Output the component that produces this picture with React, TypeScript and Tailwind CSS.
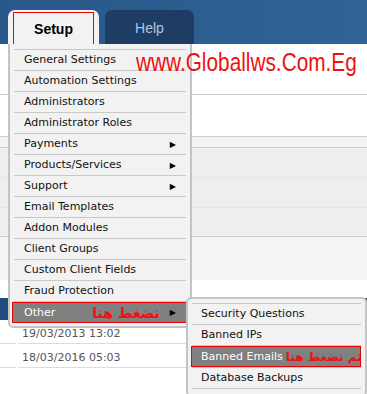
import { ReactNode } from 'react'

const menuItems: { label: string; sub?: boolean }[] = [
  { label: 'General Settings' },
  { label: 'Automation Settings' },
  { label: 'Administrators' },
  { label: 'Administrator Roles' },
  { label: 'Payments', sub: true },
  { label: 'Products/Services', sub: true },
  { label: 'Support', sub: true },
  { label: 'Email Templates' },
  { label: 'Addon Modules' },
  { label: 'Client Groups' },
  { label: 'Custom Client Fields' },
  { label: 'Fraud Protection' },
]

const Arrow = () => <span className="text-[8px] leading-none text-black">▶</span>

const Row = ({ children }: { children: ReactNode }) => (
  <div className="mx-[4px] flex h-[21px] items-center justify-between border-t border-[#c8c8c8] pl-[10px] pr-[10px] pt-[1px]">
    {children}
  </div>
)

const Arabic = ({ text, size = 'text-[14px]' }: { text: string; size?: string }) => (
  <span dir="rtl" className={`whitespace-nowrap font-bold leading-none text-[#ee1111] ${size}`} style={{ fontFamily: '"DejaVu Sans", sans-serif' }}>
    {text}
  </span>
)

export default function App() {
  return (
    <div className="relative h-[394px] w-[367px] overflow-hidden bg-white text-[11px] text-[#111]" style={{ fontFamily: '"DejaVu Sans", sans-serif' }}>
      {/* header tabs */}
      <div className="flex h-[44px] items-end bg-gradient-to-r from-[#29588a] to-[#2f6396] pl-[8px]">
        <div className="flex h-[34px] w-[91px] rounded-t-[7px] bg-[#f2f2f2] px-[5px] pt-[2px]">
          <div className="flex flex-1 items-center justify-center border border-b-0 border-[#ee0000] pt-[2px] text-[14px] font-bold text-black" style={{ fontFamily: '"Liberation Sans", sans-serif' }}>
            Setup
          </div>
        </div>
        <div className="ml-[6px] flex h-[34px] w-[89px] items-center justify-center rounded-t-[7px] bg-[#1e3d64] pt-[2px] text-[14px] text-[#b4c6e8]" style={{ fontFamily: '"Liberation Sans", sans-serif' }}>
          Help
        </div>
      </div>

      {/* page content behind the menu */}
      <div className="h-[51px] border-b border-[#cccccc]" />
      <div className="h-[42px] border-b border-[#cccccc]" />
      <div className="h-[11px] border-b border-[#cccccc] bg-[#f4f4f4]" />
      <div className="border-b border-[#cccccc] bg-[#eeeeee]">
        <div className="h-[30px] border-b border-[#e6e6e6]" />
        <div className="h-[30px] border-b border-[#e6e6e6]" />
        <div className="h-[28px]" />
      </div>
      <div className="h-[43px] bg-[#f4f4f4]" />
      <div className="h-[18px]" />
      <div className="h-[22px] bg-[#1f4c7d]" />
      {['19/03/2013 13:02', '18/03/2016 05:03'].map((d) => (
        <div key={d} className="flex h-[24px] gap-[2px]">
          <div className="w-[16px] border-b border-[#dddddd]" />
          <div className="flex flex-1 items-center border-b border-[#dddddd] pl-[4px] pt-[6px] text-[#555555]">{d}</div>
        </div>
      ))}

      {/* dropdown menu */}
      <div className="absolute left-[8px] top-[44px] h-[284px] w-[184px] rounded-b-[5px] border-x-2 border-b-2 border-[#c4c4c4] bg-[#f2f2f2] pt-[5px]">
        {menuItems.map((it) => (
          <Row key={it.label}>
            <span>{it.label}</span>
            {it.sub && <Arrow />}
          </Row>
        ))}
        <div className="mx-[4px] border-t border-[#c8c8c8]">
          <div className="-mx-[2px] flex h-[21px] items-center justify-between border border-[#ee0000] bg-[#808080] pl-[11px] pr-[11px] pt-[1px]">
            <span className="text-white">Other</span>
            <div className="flex items-center gap-[10px]">
              <Arabic text="نضغط هنا" />
              <Arrow />
            </div>
          </div>
        </div>
      </div>

      {/* submenu */}
      <div className="absolute left-[186px] top-[297px] h-[100px] w-[181px] rounded-[5px] border-2 border-[#c4c4c4] bg-[#f2f2f2] pt-[4px]">
        <div className="mx-[4px] flex h-[21px] items-center border-t border-[#c8c8c8] pl-[9px] pt-[1px]">Security Questions</div>
        <div className="mx-[4px] flex h-[21px] items-center border-t border-[#c8c8c8] pl-[9px] pt-[1px]">Banned IPs</div>
        <div className="mx-[4px] border-t border-[#c8c8c8]">
          <div className="-ml-[1px] flex h-[21px] items-center gap-[3px] overflow-hidden whitespace-nowrap border border-[#ee0000] bg-[#808080] pl-[9px] pt-[1px]">
            <span className="text-white">Banned Emails</span>
            <Arabic text="ثم نضغط هنا" size="text-[12px]" />
          </div>
        </div>
        <div className="mx-[4px] flex h-[21px] items-center border-t border-[#c8c8c8] pl-[9px] pt-[1px]">Database Backups</div>
        <div className="mx-[4px] border-t border-[#c8c8c8]" />
      </div>

      {/* watermark */}
      <div className="absolute left-[136px] top-[49px] origin-left scale-x-[0.8] whitespace-nowrap text-[26px] leading-none text-[#ee1111]" style={{ fontFamily: '"Liberation Sans", sans-serif' }}>
        www.Globallws.Com.Eg
      </div>
    </div>
  )
}
